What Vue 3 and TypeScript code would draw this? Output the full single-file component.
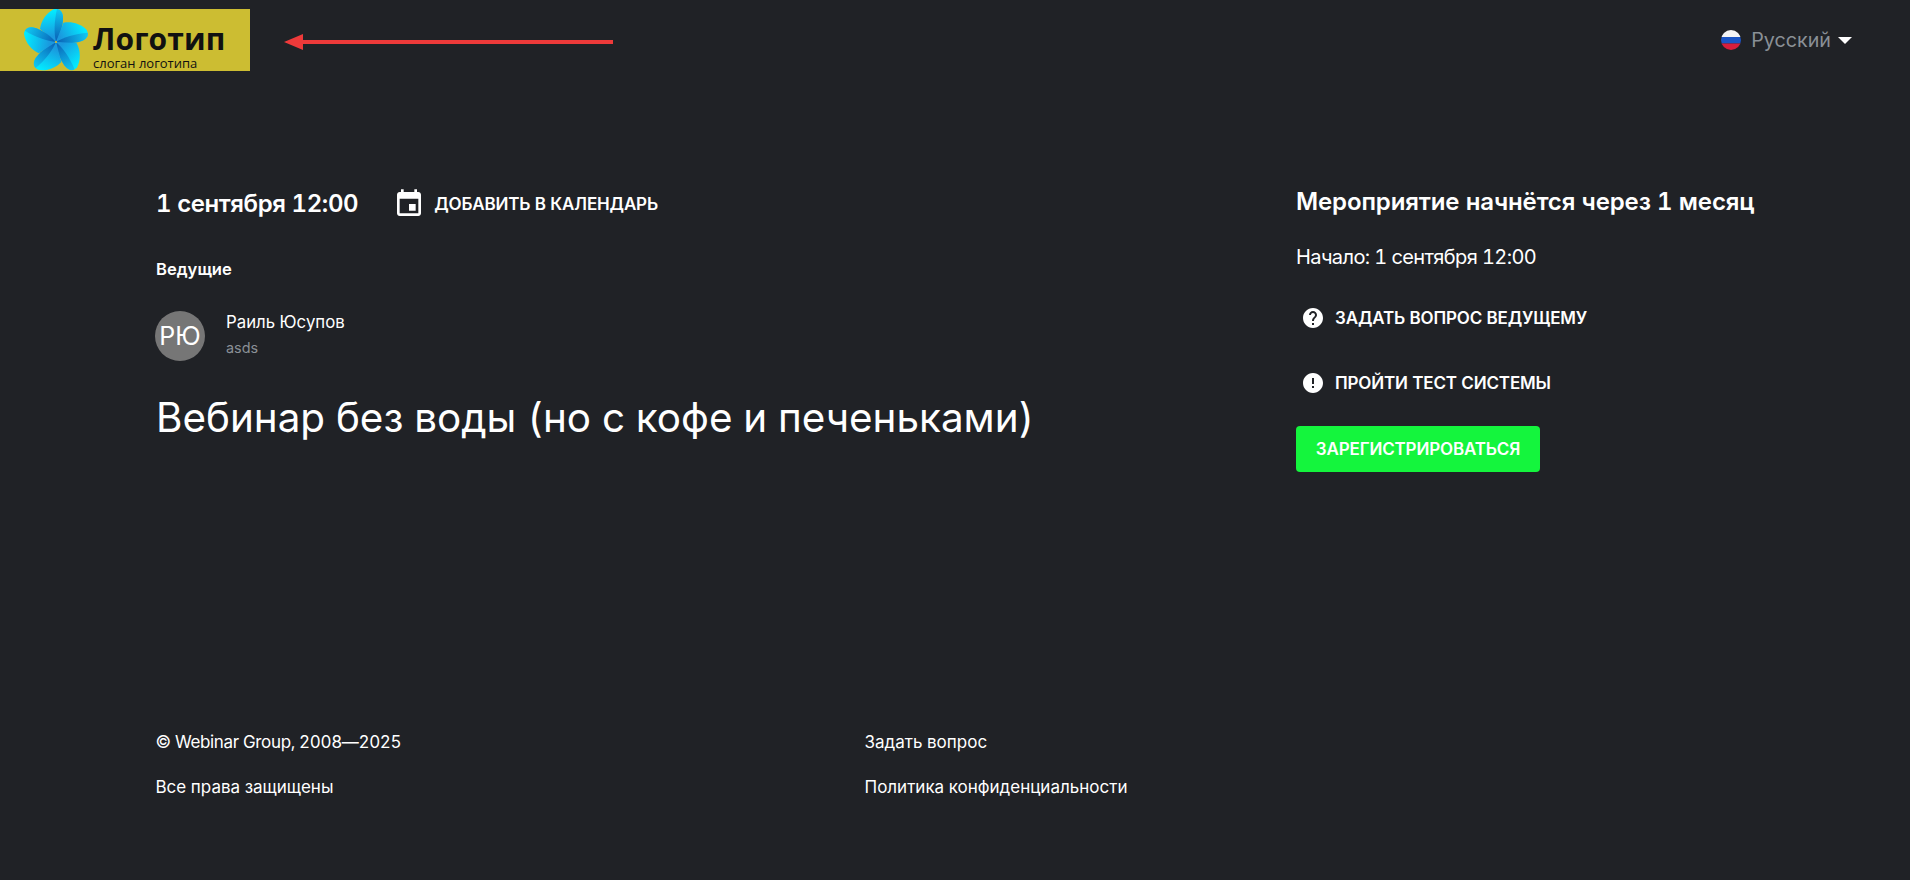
<template>
  <div class="page">
    <header class="header">
      <a class="logo">
        <svg class="logo__mark" width="66" height="62" viewBox="0 0 66 62">
          <defs>
            <linearGradient id="petal" gradientUnits="userSpaceOnUse" x1="0" y1="-6" x2="-4" y2="-31">
              <stop offset="0" stop-color="#1a98de" />
              <stop offset="1" stop-color="#02eaff" />
            </linearGradient>
            <linearGradient id="fold" gradientUnits="userSpaceOnUse" x1="1" y1="-3" x2="4" y2="-31">
              <stop offset="0" stop-color="#0a68ba" />
              <stop offset="1" stop-color="#0fc4f0" />
            </linearGradient>
          </defs>
          <g v-for="angle in petalAngles" :key="angle" :transform="`translate(32 33) rotate(${angle})`">
            <path d="M0 0L-16-13C-15-21-10-29-2-33C3-34 7-30 7-24C7-20 6-10 0 0Z" fill="url(#petal)" />
            <path d="M0 0C-2-9-2-20 1-33C4-33 7-30 7-24C7-20 6-10 0 0Z" fill="url(#fold)" />
          </g>
          <circle cx="32" cy="33" r="1" fill="#e8c020" />
        </svg>
        <div class="logo__text">
          <span class="logo__name">Логотип</span>
          <span class="logo__slogan">слоган логотипа</span>
        </div>
      </a>
      <button class="lang">
        <svg width="20" height="20" viewBox="0 0 20 20">
          <clipPath id="flag"><circle cx="10" cy="10" r="10" /></clipPath>
          <g clip-path="url(#flag)">
            <rect width="20" height="7" fill="#f4f4f4" />
            <rect y="7" width="20" height="6.5" fill="#1c55c4" />
            <rect y="13.5" width="20" height="6.5" fill="#d81e3c" />
          </g>
        </svg>
        <span>Русский</span>
        <i class="lang__caret"></i>
      </button>
    </header>

    <svg class="arrow" width="330" height="16" viewBox="0 0 330 16">
      <path d="M0 8 L19 0 V6 H329 V10 H19 V16 Z" fill="#ee3a3a" />
    </svg>

    <main class="main">
      <section class="event">
        <div class="event__date">
          <span class="date">1 сентября 12:00</span>
          <a class="action action--calendar">
            <svg width="32" height="32" viewBox="0 0 24 24" fill="#fff">
              <path d="M17 12h-5v5h5v-5zM16 1v2H8V1H6v2H5c-1.11 0-1.99.9-1.99 2L3 19c0 1.1.89 2 2 2h14c1.1 0 2-.9 2-2V5c0-1.1-.9-2-2-2h-1V1h-2zm3 18H5V8h14v11z" />
            </svg>
            <span>Добавить в календарь</span>
          </a>
        </div>
        <div class="hosts-title">Ведущие</div>
        <div class="host">
          <div class="host__avatar">РЮ</div>
          <div class="host__info">
            <div class="host__name">Раиль Юсупов</div>
            <div class="host__role">asds</div>
          </div>
        </div>
        <h1 class="title">Вебинар без воды (но с кофе и печеньками)</h1>
      </section>

      <aside class="side">
        <div class="side__heading">Мероприятие начнётся через 1 месяц</div>
        <div class="side__start">Начало: 1 сентября 12:00</div>
        <a class="action action--side">
          <svg width="24" height="24" viewBox="0 0 24 24" fill="#fff">
            <path d="M12 2C6.48 2 2 6.48 2 12s4.48 10 10 10 10-4.48 10-10S17.52 2 12 2zm1 17h-2v-2h2v2zm2.07-7.75l-.9.92C13.45 12.9 13 13.5 13 15h-2v-.5c0-1.1.45-2.1 1.17-2.83l1.24-1.26c.37-.36.59-.86.59-1.41 0-1.1-.9-2-2-2s-2 .9-2 2H8c0-2.21 1.79-4 4-4s4 1.79 4 4c0 .88-.36 1.68-.93 2.25z" />
          </svg>
          <span>Задать вопрос ведущему</span>
        </a>
        <a class="action action--side">
          <svg width="24" height="24" viewBox="0 0 24 24" fill="#fff">
            <path d="M12 2C6.48 2 2 6.48 2 12s4.48 10 10 10 10-4.48 10-10S17.52 2 12 2zm1 15h-2v-2h2v2zm0-4h-2V7h2v6z" />
          </svg>
          <span>Пройти тест системы</span>
        </a>
        <button class="register">Зарегистрироваться</button>
      </aside>
    </main>

    <footer class="footer">
      <div class="footer__col">
        <span class="copyright">© Webinar Group, 2008—2025</span>
        <span>Все права защищены</span>
      </div>
      <div class="footer__col">
        <a>Задать вопрос</a>
        <a>Политика конфиденциальности</a>
      </div>
    </footer>
  </div>
</template>

<script setup lang="ts">
const petalAngles: number[] = [0, 72, 144, 216, 288];
</script>

<style>
html,
body {
  margin: 0;
  background: #202226;
}
</style>

<style scoped>
* {
  box-sizing: border-box;
}

.page {
  position: relative;
  display: flex;
  flex-direction: column;
  height: 880px;
  overflow: hidden;
  background: #202226;
  color: #fff;
  font-family: Inter, Roboto, "Liberation Sans", sans-serif;
  font-variant-numeric: tabular-nums;
}

.header {
  display: flex;
  justify-content: space-between;
  align-items: flex-start;
  padding: 9px 58px 0 0;
}

.logo {
  display: flex;
  width: 250px;
  height: 62px;
  padding-left: 24px;
  background: #ccbd32;
  color: #111;
}

.logo__mark {
  flex: none;
}

.logo__text {
  display: flex;
  flex-direction: column;
  margin-left: 3px;
  font-family: "Open Sans", "Noto Sans", sans-serif;
}

.logo__name {
  margin-top: 12px;
  font-size: 30px;
  line-height: 35px;
  font-weight: 700;
  letter-spacing: 0.1px;
}

.logo__slogan {
  font-size: 13px;
  line-height: 15px;
}

.lang {
  all: unset;
  display: flex;
  align-items: center;
  gap: 10px;
  margin-top: 21px;
  color: #8a9096;
  font-size: 19.7px;
  line-height: 20px;
}

.lang__caret {
  width: 0;
  height: 0;
  margin-left: -3px;
  border-top: 7px solid #fff;
  border-left: 7px solid transparent;
  border-right: 7px solid transparent;
}

.arrow {
  position: absolute;
  top: 34px;
  left: 284px;
}

.main {
  display: grid;
  grid-template-columns: 1140px 1fr;
  flex: 1;
  padding: 115px 0 0 156px;
}

.event__date {
  display: flex;
  align-items: center;
  height: 36px;
}

.date {
  font-size: 24px;
  line-height: 32px;
  font-weight: 600;
  letter-spacing: -0.4px;
}

.action {
  display: flex;
  align-items: center;
  font-size: 17px;
  font-weight: 600;
  letter-spacing: -0.15px;
  text-transform: uppercase;
}

.action--calendar {
  gap: 9px;
  margin-left: 35px;
}

.hosts-title {
  margin-top: 35px;
  font-size: 16.6px;
  line-height: 24px;
  font-weight: 600;
}

.host {
  display: flex;
  gap: 21px;
  margin: 30px 0 0 -1px;
}

.host__avatar {
  display: flex;
  align-items: center;
  justify-content: center;
  width: 50px;
  height: 50px;
  border-radius: 50%;
  background: #767676;
  font-size: 25px;
}

.host__name {
  margin-top: -1px;
  font-size: 16.8px;
  line-height: 24px;
}

.host__role {
  margin-top: 4px;
  color: #8a9096;
  font-size: 14.4px;
  line-height: 20px;
}

.title {
  margin: 29px 0 0;
  font-size: 40.4px;
  line-height: 56px;
  font-weight: 400;
}

.side__heading {
  font-size: 24px;
  line-height: 32px;
  font-weight: 600;
  letter-spacing: -0.13px;
}

.side__start {
  margin-top: 25px;
  font-size: 20px;
  line-height: 28px;
  letter-spacing: -0.6px;
}

.action--side {
  gap: 10px;
  height: 24px;
  margin-top: 35px;
  padding-left: 5px;
}

.action--side + .action--side {
  margin-top: 41px;
}

.register {
  all: unset;
  display: block;
  margin-top: 31px;
  width: 244px;
  height: 46px;
  border-radius: 4px;
  background: #14f53d;
  color: #fff;
  font-size: 17px;
  line-height: 46px;
  font-weight: 600;
  text-align: center;
  text-transform: uppercase;
  letter-spacing: -0.15px;
}

.footer {
  display: grid;
  grid-template-columns: 709px 1fr;
  padding: 0 0 81px 155.5px;
  font-size: 17px;
  line-height: 24px;
}

.copyright {
  letter-spacing: -0.35px;
}

.footer__col {
  display: flex;
  flex-direction: column;
  gap: 21px;
}
</style>
